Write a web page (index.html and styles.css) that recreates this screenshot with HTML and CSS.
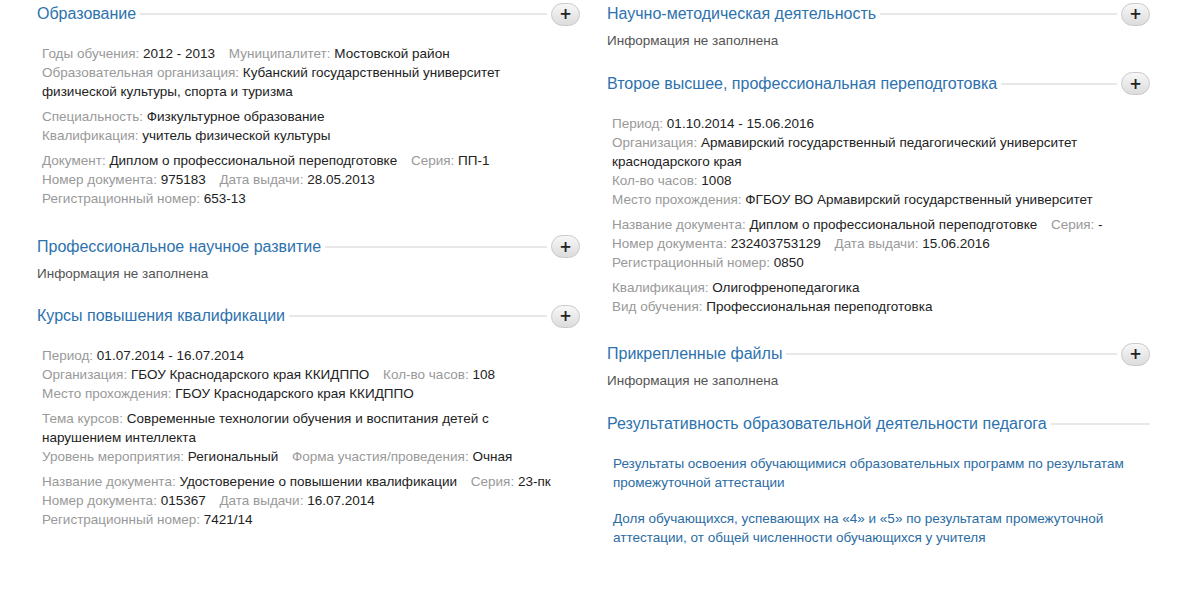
FILE: index.html
```html
<!DOCTYPE html>
<html>
<head>
    <meta charset="UTF-8">
    <meta name="viewport" content="width=device-width, initial-scale=1.0">
    <title>Портфолио педагога</title>
    <link rel="stylesheet" href="styles.css">
</head>
<body>
    <div class="page">
        <div class="column">
            <div class="section">
                <div class="section-head">
                    <h2>Образование</h2>
                    <span class="line"></span>
                    <button class="add">+</button>
                </div>
                <div class="details">
                    <div class="group">
                        <p><span class="label">Годы обучения:</span> 2012 - 2013 <span class="label sep">Муниципалитет:</span> Мостовской район</p>
                        <p><span class="label">Образовательная организация:</span> Кубанский государственный университет физической культуры, спорта и туризма</p>
                    </div>
                    <div class="group">
                        <p><span class="label">Специальность:</span> Физкультурное образование</p>
                        <p><span class="label">Квалификация:</span> учитель физической культуры</p>
                    </div>
                    <div class="group">
                        <p><span class="label">Документ:</span> Диплом о профессиональной переподготовке <span class="label sep">Серия:</span> ПП-1</p>
                        <p><span class="label">Номер документа:</span> 975183 <span class="label sep">Дата выдачи:</span> 28.05.2013</p>
                        <p><span class="label">Регистрационный номер:</span> 653-13</p>
                    </div>
                </div>
            </div>
            <div class="section">
                <div class="section-head">
                    <h2>Профессиональное научное развитие</h2>
                    <span class="line"></span>
                    <button class="add">+</button>
                </div>
                <p class="empty">Информация не заполнена</p>
            </div>
            <div class="section">
                <div class="section-head">
                    <h2>Курсы повышения квалификации</h2>
                    <span class="line"></span>
                    <button class="add">+</button>
                </div>
                <div class="details">
                    <div class="group">
                        <p><span class="label">Период:</span> 01.07.2014 - 16.07.2014</p>
                        <p><span class="label">Организация:</span> ГБОУ Краснодарского края ККИДППО <span class="label sep">Кол-во часов:</span> 108</p>
                        <p><span class="label">Место прохождения:</span> ГБОУ Краснодарского края ККИДППО</p>
                    </div>
                    <div class="group">
                        <p><span class="label">Тема курсов:</span> Современные технологии обучения и воспитания детей с нарушением интеллекта</p>
                        <p><span class="label">Уровень мероприятия:</span> Региональный <span class="label sep">Форма участия/проведения:</span> Очная</p>
                    </div>
                    <div class="group">
                        <p><span class="label">Название документа:</span> Удостоверение о повышении квалификации <span class="label sep">Серия:</span> 23-пк</p>
                        <p><span class="label">Номер документа:</span> 015367 <span class="label sep">Дата выдачи:</span> 16.07.2014</p>
                        <p><span class="label">Регистрационный номер:</span> 7421/14</p>
                    </div>
                </div>
            </div>
        </div>
        <div class="column">
            <div class="section">
                <div class="section-head">
                    <h2>Научно-методическая деятельность</h2>
                    <span class="line"></span>
                    <button class="add">+</button>
                </div>
                <p class="empty">Информация не заполнена</p>
            </div>
            <div class="section">
                <div class="section-head">
                    <h2>Второе высшее, профессиональная переподготовка</h2>
                    <span class="line"></span>
                    <button class="add">+</button>
                </div>
                <div class="details">
                    <div class="group">
                        <p><span class="label">Период:</span> 01.10.2014 - 15.06.2016</p>
                        <p><span class="label">Организация:</span> Армавирский государственный педагогический университет краснодарского края</p>
                        <p><span class="label">Кол-во часов:</span> 1008</p>
                        <p><span class="label">Место прохождения:</span> ФГБОУ ВО Армавирский государственный университет</p>
                    </div>
                    <div class="group">
                        <p><span class="label">Название документа:</span> Диплом о профессиональной переподготовке <span class="label sep">Серия:</span> -</p>
                        <p><span class="label">Номер документа:</span> 232403753129 <span class="label sep">Дата выдачи:</span> 15.06.2016</p>
                        <p><span class="label">Регистрационный номер:</span> 0850</p>
                    </div>
                    <div class="group">
                        <p><span class="label">Квалификация:</span> Олигофренопедагогика</p>
                        <p><span class="label">Вид обучения:</span> Профессиональная переподготовка</p>
                    </div>
                </div>
            </div>
            <div class="section">
                <div class="section-head">
                    <h2>Прикрепленные файлы</h2>
                    <span class="line"></span>
                    <button class="add">+</button>
                </div>
                <p class="empty">Информация не заполнена</p>
            </div>
            <div class="section">
                <div class="section-head">
                    <h2>Результативность образовательной деятельности педагога</h2>
                    <span class="line last"></span>
                </div>
                <div class="links">
                    <a href="#">Результаты освоения обучающимися образовательных программ по результатам промежуточной аттестации</a>
                    <a href="#">Доля обучающихся, успевающих на «4» и «5» по результатам промежуточной аттестации, от общей численности обучающихся у учителя</a>
                </div>
            </div>
        </div>
    </div>
</body>
</html>
```

FILE: styles.css
```css
body {
    margin: 0;
    background: #fff;
    font-family: "Liberation Sans", Arial, sans-serif;
    font-size: 13.5px;
    color: #222;
}
.page {
    display: flex;
    gap: 27px;
    padding-left: 37px;
}
.column {
    width: 543px;
}
.section {
    margin-bottom: 19.5px;
}
.section-head {
    display: flex;
    align-items: center;
    height: 28px;
}
.section-head h2 {
    margin: 0;
    font-size: 16px;
    font-weight: normal;
    color: #2d72ae;
    white-space: nowrap;
}
.line {
    flex: 1;
    height: 2px;
    margin: 0 4px;
    background-color: #e8e8e8;
}
.line.last {
    margin-right: 0;
}
.add {
    width: 29px;
    height: 23px;
    padding: 0;
    border: 1px solid #c9c9c9;
    border-radius: 12px;
    background: linear-gradient(#f7f7f7, #dcdcdc);
    color: #222;
    font-family: "DejaVu Sans", sans-serif;
    font-size: 15px;
    font-weight: bold;
    line-height: 20px;
    cursor: pointer;
}
.details {
    padding: 16px 10px 5px 5px;
}
.group {
    margin-bottom: 6px;
}
.group:last-child {
    margin-bottom: 0;
}
.group p, .empty {
    margin: 0;
    line-height: 19px;
}
.label {
    color: #999;
}
.sep {
    margin-left: 10px;
}
.empty {
    margin-top: 3px;
    color: #555;
}
.links {
    padding: 16px 0 0 6px;
}
.links a {
    display: block;
    margin-bottom: 17px;
    line-height: 19px;
    color: #2b6ca3;
    text-decoration: none;
}
```
